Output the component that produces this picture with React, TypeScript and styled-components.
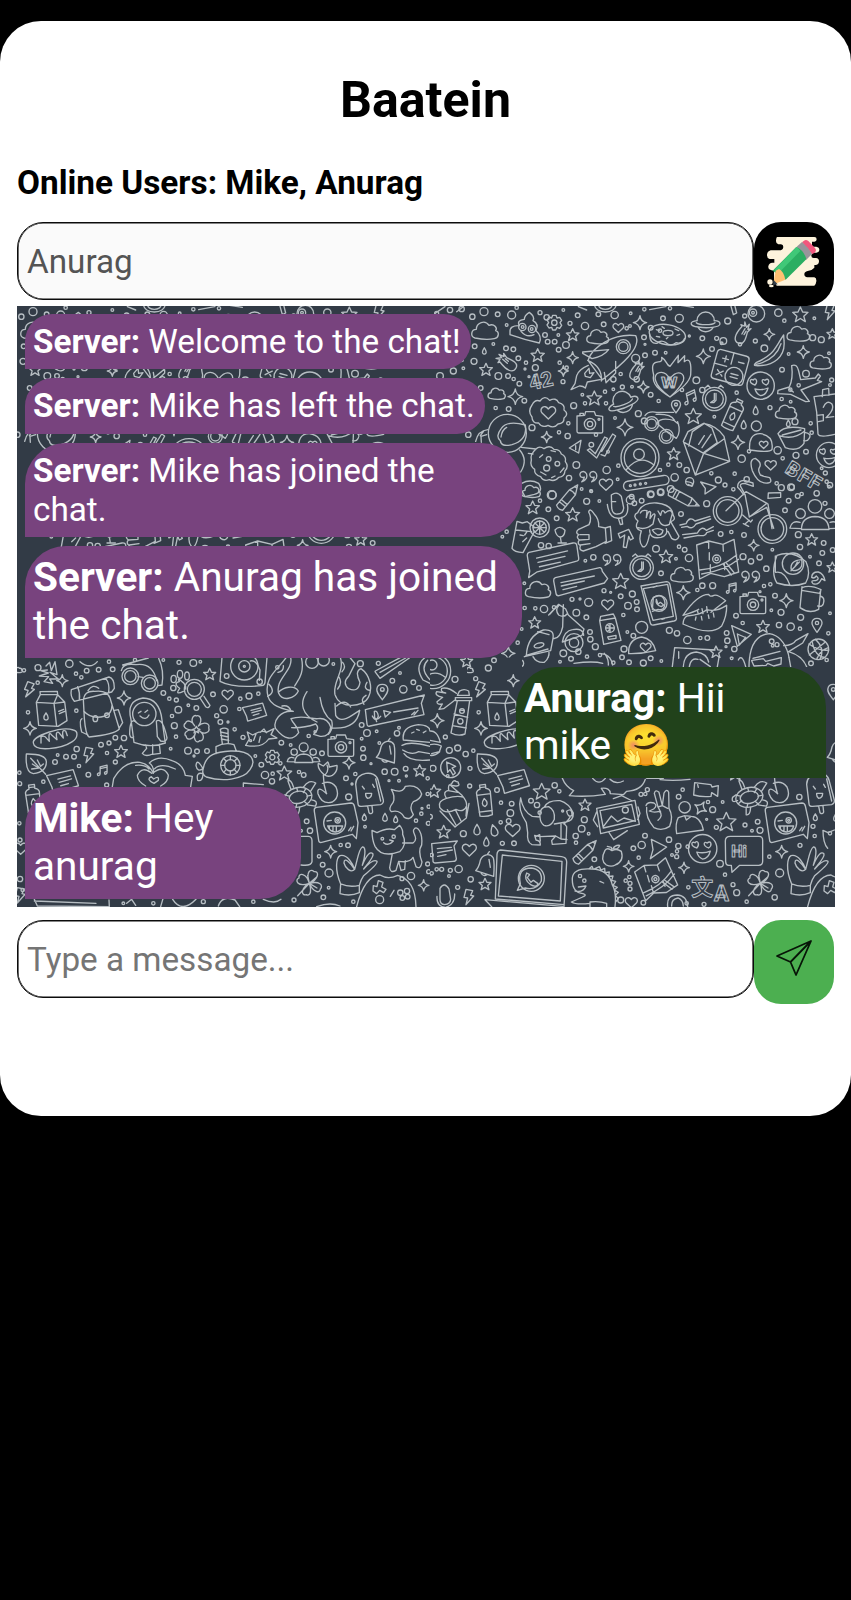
import React from "react";
import styled, { createGlobalStyle } from "styled-components";

const GlobalStyle = createGlobalStyle`
  * { box-sizing: border-box; }
  body { margin: 0; background: #000; font-family: Roboto, sans-serif; }
`;

const Page = styled.div`
  min-height: 1600px;
  padding-top: 20.5px;
  background: #000;
`;

const Card = styled.main`
  height: 1095.5px;
  padding: 0 17px;
  border-radius: 41px;
  background: #fff;
`;

const Title = styled.h1`
  margin: 0;
  padding-top: 50px;
  font-size: 50.1px;
  line-height: 58px;
  font-weight: 700;
  text-align: center;
  color: #000;
`;

const OnlineUsers = styled.h2`
  margin: 34px 0 0;
  font-size: 33.35px;
  line-height: 39px;
  font-weight: 700;
  color: #000;
`;

const FieldRow = styled.div<{ $top: number }>`
  display: flex;
  align-items: flex-start;
  height: 84px;
  margin-top: ${(p) => p.$top}px;
`;

const Field = styled.input<{ $filled?: boolean }>`
  width: 737px;
  height: 78px;
  padding: 0 9px;
  border: 1px solid #0c0c0c;
  border-radius: 26px;
  box-shadow: inset 0 0 0 0.6px #0c0c0c;
  outline: none;
  background: ${(p) => (p.$filled ? "#fafafa" : "#fff")};
  color: #545454;
  font: 400 33.25px Roboto, sans-serif;
  &::placeholder { color: #757575; opacity: 1; }
`;

const IconButton = styled.button<{ $color: string }>`
  display: flex;
  align-items: center;
  justify-content: center;
  width: 80.5px;
  height: 84px;
  padding: 0 0 6px;
  border: 0;
  border-radius: 27px;
  background: ${(p) => p.$color};
`;

const ChatPanel = styled.section`
  position: relative;
  width: 817.5px;
  height: 601px;
  overflow: hidden;
  background: #323b46;
`;

const Wallpaper = styled.svg`
  position: absolute;
  inset: 0;
  fill: none;
  stroke: #b7bec3;
  stroke-width: 1.35px;
  stroke-linecap: round;
  stroke-linejoin: round;
  path, circle, ellipse, rect, text { vector-effect: non-scaling-stroke; }
  text { stroke-width: 1px; }
`;

const Messages = styled.div`
  position: relative;
  display: flex;
  flex-direction: column;
  align-items: flex-start;
  gap: 9px;
  padding: 8px 8.5px 8px 8px;
`;

const Bubble = styled.div<{ $own?: boolean; $large?: boolean; $width: number; $height: number }>`
  align-self: ${(p) => (p.$own ? "flex-end" : "flex-start")};
  width: ${(p) => p.$width}px;
  height: ${(p) => p.$height}px;
  padding: 8px 8px;
  border-radius: ${(p) => (p.$own ? "41px 41px 0 41px" : "41px 41px 41px 0")};
  background: ${(p) => (p.$own ? "#21421b" : "#78437e")};
  color: #fff;
  font-size: ${(p) => (p.$large ? 40.6 : 33.27)}px;
  line-height: ${(p) => (p.$large ? 47.5 : 39)}px;
`;

type Placed = [string, number, number, number?, number?];

const SHAPES: Record<string, React.ReactNode> = {
  star: <path d="M0-20L6-7 20-6 9 4 13 18 0 10-13 18-9 4-20-6-6-7Z" />,
  spark: <path d="M0-21Q2-3 20 0Q3 3 0 21Q-3 3-20 0Q-3-3 0-21Z" />,
  heart: <path d="M0 18L-17 2C-27-10-10-24 0-9C10-24 27-10 17 2Z" />,
  cloud: <path d="M-30 22C-45 18-42-4-26-4C-26-24 0-34 12-16C28-22 38-8 32 0C44 4 42 22 28 24C10 28-12 26-30 22Z" />,
  drop: <path d="M0-16C8-4 12 4 8 11C4 17-4 17-8 11C-12 4-8-4 0-16Z" />,
  bolt: <path d="M-8-22L12-18 6-4 15-2-8 24-3 4-14 2Z" />,
  note: <path d="M-12 14V-12L14-18V8M-12-5L14-11M-12 14C-14 8-24 12-22 18C-20 24-12 20-12 14M14 8C10 4 2 8 5 14C8 18 14 14 14 8" />,
  quote: <path d="M-5-8C-12-20-27-12-22-2C-20 3-14 3-11 1Q-11 9-18 14C-4 10-2 0-5-8ZM22-8C15-20 0-12 5-2C7 3 13 3 16 1Q16 9 9 14C23 10 25 0 22-8Z" />,
  gear: <><path d="M-5-22H5L8-14 16-16 22-7 17 0 22 8 16 17 8 14 4 22H-5L-8 14-16 16-22 7-17 0-22-8-16-17-8-14Z" /><circle r="8" /></>,
  pin: <><path d="M0 22C-12 6-16 1-15-7C-13-24 13-24 15-7C16 1 12 6 0 22Z" /><circle cy="-6" r="5" /></>,
  camera: <><path d="M-39-19L-16-21-13-32H13L17-21 38-18V28Q38 32 33 32H-34Q-39 32-39 27ZM-30-20V-27H-20V-20" /><circle cy="5" r="17" /><circle cy="5" r="8" /><circle cx="27" cy="-9" r="3" /></>,
  pencil: <path d="M-46-10H17L46 0 17 15H-46Q-54 2-46-10ZM-32-10V15M-23-10V15M17-10Q22 0 17 15M36-4V5" />,
  planet: <><path d="M-26-8A26 26 0 0 1 26-8M-22 13A26 26 0 0 0 22 13" /><path d="M-26-8C-50-5-50 8-22 11C4 16 42 12 43 2C43-5 34-8 26-8M-28-2C-20 6 20 6 28-2" /></>,
  comet: <path d="M30 14C20 32 0 20-18-4L-24-2-18-12-30-15-13-17-21-27-6-20-7-30 2-17C20-9 38 0 30 14M-10-12L4 0M-2-14L7-6" />,
  clock: <><circle r="35" /><circle r="27" /><path d="M0-17V3L-11 11H-2L5 4V-17M-12-34L-19-41-27-34M12-34L19-41 27-34" /></>,
  bottle: <><path d="M-17 42L-19-22Q-17-29-8-31V-42H8V-31Q17-29 19-22L17 42Q0 47-17 42ZM-8-35H8M-19-15H19M-18 31H18" /><path d="M0-4Q13 11 0 18Q-13 11 0-4Z" /></>,
  flower: <><path d="M-5-12C-22-30-8-48 0-42C13-47 20-28 6-11C24-28 43-18 38-6C43 8 23 17 10 4C29 17 21 37 10 34C0 46-11 25-3 11C-10 32-30 34-31 20C-41 15-31-2-11 1C-37 1-43-13-33-20C-28-34-10-23-5-12Z" /><path d="M0-10L4-3 11-1 5 3 7 10 0 6-7 10-5 3-11-1-4-3Z" /></>,
  clover: <path d="M0 0C-36 12-45-10-31-16C-34-33-8-32 0 0C-12-36 5-45 14-35C32-38 27-11 0 0C31-8 43 6 33 17C32 31 12 28 0 0C9 29 0 39-9 34C-23 39-29 17 0 0ZM0 0L-35 37M-5-24L0 0 23-20M0 0L23 14" />,
  turtle: <><ellipse rx="43" ry="31" transform="rotate(-12)" /><ellipse rx="29" ry="19" transform="rotate(-12)" /><path d="M-5-30L-2-18M24-28L16-15M42-7L28-4M29 22L19 13M-7 31L-5 20M-35 20L-24 10M-40-6L-28-4M-24-27L-33-52Q-23-58-15-32M16-32Q34-59 55-45L38-18M42 8Q64 11 54 28L28 24M-10 32V55Q3 58 4 32M-37 10Q-58 20-53 0L-42-8" /></>,
  milk: <path d="M-46-22L-34-45H18L39-23 46 33 19 50-39 47ZM-46-22L7-19 18-45M7-19L15 50M7-19L39-23M-34-45L-35-54 17-55 18-45M-17 10C-27 23-24 31-17 31C-8 31-9 20-17 10M21 5L36-1M23 12L39 5" />,
  bread: <path d="M-64 8C-68-13 22-44 56-31C71-28 71-8 53 4C20 26-61 36-64 8ZM-41-11V8M-40-11Q-30-16-24-6L-16 3Q-20-30-9-16L7-2Q1-28 12-24L26-7Q19-34 33-28L38-14" />,
  leaf: <path d="M-29-30Q28-31 31-8Q32 24-8 29Q-33 26-29-30ZM-16-17L29 31M-11 0L8 12-13 15M4-12L14 7 22 0" />,
  card: <path d="M-51-18L33-37 50 14-29 38-34 18ZM-15-7L25-17M-11 3L28-8M-6 14L18 7" />,
  wink: <><path d="M-60-48L44-61Q52-61 54-52L65-2 60 46 48 33-44 57Q-52 59-53 51L-66-36Q-68-46-60-48Z" /><circle cx="-5" cy="-1" r="33" /><circle cx="4" cy="-9" r="8" /><circle cx="4" cy="-9" r="3" /><path d="M-28-7L-15-9M-26 8H19Q15 25-3 26Q-20 25-26 8M-21 9V16M-10 10V22M0 10V24M37 22L44 12M44 23L52 9" /></>,
  hand: <path d="M-34 78L-32 49C-51 5-45-30-34-36C-12-42 4-11 10 5C-1 17-18 2-22-14C-22-36 0-11 10 5C19-25 22-56 33-62C47-64 39-24 33-7C45-37 57-51 65-41C68-31 46-8 37 4C54-15 69-26 77-19C81-11 48 14 37 24Q28 37 24 53V75Q-3 87-34 78ZM-32 49Q-5 60 24 53" />,
  loveFace: <><circle r="41" /><path d="M-17-2C-38-8-32-23-22-17C-15-27-7-12-17-2M17-2C-2-9 4-24 13-16C24-26 29-10 17-2M-17 10Q4 15 22 7Q17 28 0 30Q-12 26-17 10" /></>,
  map: <><path d="M-60-45L-24-57 19-47 52-62 66 36 23 50-18 40-51 57ZM-24-57V-35M-22-22V0M-19 14V37M19-47L20-26M23 12L24 29M-51 30Q10 26 60-15M-45 42Q22 33 66-2M20 13L44 45M28 8L53 39" /><g transform="translate(0 -3)"><circle r="12" /><circle r="5" /></g></>,
  person: <><circle cy="-33" r="18" /><path d="M-39 46C-41 14-23 0 0-4C24 0 36 13 42 37Q2 47-39 46" /></>,
  bell: <path d="M-28 19Q-18 9-14-12C-8-30 15-36 25-19Q29-4 26 36ZM-12 26Q-5 38 6 31M8-31L13-38M12-15L16 9" />,
  ice: <path d="M-36-22C-36-60 23-67 31-35L47 25Q49 35 39 39L-18 44Q-29 45-29 36ZM-16-16L-10-8M15-22L20-13M-6 5H12Q12 19 0 20Q-7 16-6 5M0 44L4 63Q11 70 15 61L13 43M24-38L39 28" />,
  crowd: <><circle cy="-20" r="14" /><circle cx="-30" cy="-5" r="10" /><circle cx="30" cy="-5" r="10" /><path d="M-28 28Q-28 2 0 1Q28 2 29 28ZM-31 13Q-48 8-52 25L-29 26M31 13Q47 8 51 25L30 26" /></>,
  bubble: <path d="M-62-36L60-62Q70-64 71-54L76-20Q77-12 68-11L-39 18-63 34-60 16-67-28Q-67-34-62-36ZM-41-20L45-40M-37-8L38-25M-33 4L25-9" />,
};

const Doodles = ({ items }: { items: Placed[] }) => (
  <>
    {items.map(([kind, x, y, s = 1, r = 0], i) => (
      <g key={i} transform={`translate(${x} ${y}) rotate(${r}) scale(${s})`}>{SHAPES[kind]}</g>
    ))}
  </>
);

const Dots = ({ at }: { at: string }) => (
  <>
    {at.trim().split(/\s+/).map((dot, i) => {
      const [x, y, r] = dot.split(",");
      return <circle key={i} cx={x} cy={y} r={r || 7} />;
    })}
  </>
);

const skyItems: Placed[] = [
  ["cloud", 165, 92], ["cloud", 503, 110, 0.82], ["cloud", 1105, 101, 0.85], ["cloud", 1172, 186, 0.8], ["cloud", 200, 281, 0.65], ["cloud", 1068, 336, 0.8], ["cloud", 303, 574, 0.7],
  ["gear", 373, 68], ["heart", 565, 83, 0.8], ["spark", 630, 68], ["star", 428, 105, 0.95], ["star", 323, 166], ["star", 168, 209, 0.95], ["spark", 428, 173, 0.85], ["spark", 400, 213, 0.75],
  ["planet", 827, 70], ["planet", 580, 310, 1.08, -22], ["star", 1111, 44, 1.15], ["star", 1207, 102, 0.8], ["spark", 1018, 103, 0.8], ["spark", 1120, 156, 0.9], ["spark", 820, 169, 1.05], ["spark", 640, 261, 0.85], ["spark", 256, 290, 1.1], ["star", 493, 295, 1.1],
  ["comet", 228, 190], ["comet", 617, 210, 0.9, 80], ["comet", 935, 98, 1, 80], ["bolt", 1200, 35], ["note", 783, 290, 1, -12], ["clock", 853, 297], ["bottle", 911, 342, 1.1, 25], ["pin", 738, 319, 0.9], ["star", 790, 349, 1.2],
  ["camera", 480, 367], ["spark", 585, 382, 1.2], ["spark", 350, 411, 0.8], ["star", 731, 462, 0.95], ["spark", 924, 427, 1], ["loveFace", 992, 257], ["loveFace", 1197, 465, 0.92], ["drop", 977, 331, 0.8], ["drop", 941, 374, 0.8], ["drop", 163, 153, 0.6], ["drop", 1075, 370, 0.6],
  ["heart", 355, 337, 1.1], ["heart", 1022, 495, 0.85], ["quote", 475, 530, 1.1], ["heart", 1001, 434, 0.65],
];
const skyDots = `127,50,8 162,35,12 203,43 245,45,12 230,75,4 345,105 353,125 400,30,4 443,46 465,78,11 505,43 521,73 554,45,11 602,40,4 643,28,5 662,83 642,112 699,55 748,55,12 720,25,5 893,63,9 778,108,3 645,133,3 817,115 860,115,6 880,123,10 944,48,6 1045,38,11 1063,62,5 1148,113,9 1174,119,9 1153,55,4 976,123,6 1003,145,10 1076,162,4 846,147 250,148 265,175 228,145 190,132,4 132,184,9 134,139 288,188,5 316,203,9 285,207,3 389,188,5 408,135,10 386,149 374,125 234,228 205,228,10 297,230,3 399,245,6 268,251 251,237,5 283,302 236,327 197,324,5 152,264 457,284,4 431,317,9 465,310,5 550,268,4 577,261,6 606,260,4 645,166 675,158 707,158,4 617,175,12 572,222,5 550,238,8 620,238,8 662,284 686,303,5 625,341,9 643,363,9 555,354,4 528,310,5 525,275,5 756,270,5 799,241,10 817,270,8 920,278,5 1056,209 1128,221,10 1205,240,6 1020,323,6 1082,305,4 1055,297,5 853,350,4 1095,365,9 1142,370,5 1145,398,5 979,378,15 1128,455 1098,466,9 1043,451,11 1058,475,5 1186,519,6 935,476,11 914,521,5 950,538,8 957,454,5 865,540,9 844,520,5 748,495 715,494,5 770,510,8 690,510,5 734,532,11 779,545,12 601,600,12 663,583,8 692,576,8 722,567,10 530,510,11 565,497,5 563,538,4 534,455,4 439,495,10 484,434 417,534,8 455,567,4 484,574,4 367,585,12 387,397,5 413,408,8 415,370,5 498,404,5 306,383,9 115,404,8 1175,505,4 1054,563,9 1085,561,8 1115,582,5 1160,580,8 1197,560,4 1190,545,5 1200,255,4 1197,160,4 420,70,6 385,105,4 600,78,4 70,213,9 95,180,5 100,205,4 30,228,10 20,40,6 60,30,8 95,27,8 260,23,5 330,38,6 350,52,8 410,203,5 590,85,5 690,92,5 875,130,4 930,133,5`;

const Sky = ({ lettered }: { lettered?: boolean }) => (
  <g transform="translate(430 300) scale(.33333)">
    <Doodles items={skyItems} />
    <Dots at={skyDots} />
    <path d="M240 97Q238 76 268 77Q259 61 283 58Q283 46 298 37Q316 50 309 62Q328 72 318 92Q337 108 328 129Q282 119 240 104ZM273 94Q290 114 312 104" />
    <circle cx="277" cy="81" r="11" /><circle cx="306" cy="87" r="11" /><circle cx="278" cy="81" r="4" /><circle cx="305" cy="87" r="4" />
    <ellipse cx="712" cy="104" rx="55" ry="30" transform="rotate(10 712 104)" /><ellipse cx="714" cy="99" rx="15" ry="8" />
    <path d="M659 101Q659 133 681 130Q692 118 708 128Q722 141 738 128Q756 134 764 115M679 89L688 92M696 80L703 85M735 87L746 92M679 109L689 111M709 116L714 112M741 106L749 103" />
    <path d="M474 181C487 140 551 99 617 107C637 143 571 198 517 239ZM458 156L536 149Q521 169 486 176L458 160ZM557 184L557 219 528 248 523 217M473 181Q518 200 514 243M475 196Q446 208 440 227L435 251 423 269 448 258Q458 257 466 264L472 246 510 239M464 220L477 205 479 220 492 218 481 233 466 229Z" />
    <circle cx="580" cy="140" r="21" /><circle cx="580" cy="140" r="14" />
    <path d="M1061 105C1033 145 1035 163 978 188Q968 197 978 197C1031 199 1067 170 1062 122ZM978 193Q1036 181 1053 131" />
    <g transform="rotate(15 900 200)"><rect x="852" y="157" width="98" height="90" rx="10" /><path d="M852 202H890M901 157V192M872 181H890M881 172V190M866 218L884 234M884 218L866 234M921 180H938" /><circle cx="919" cy="225" r="27" /><path d="M908 219H930M908 229H930" /></g>
    <path d="M671 225C655 163 702 202 695 172C713 183 706 193 720 199L745 166 744 188 764 167 763 185Q786 166 782 225Q777 253 720 291C688 270 664 252 671 225ZM720 291C666 252 669 222 688 218Q707 213 719 237C743 205 767 220 760 242Q750 264 720 291Z" />
    {lettered && (
      <>
        <text x="694" y="265" fontSize="42" fontWeight="800" textLength="48" lengthAdjust="spacingAndGlyphs">W</text>
        <text x="303" y="271" fontSize="62" fontWeight="800" transform="rotate(-13 303 271)">42</text>
        <text x="1062" y="516" fontSize="60" fontWeight="800" letterSpacing="4" transform="rotate(31 1062 516)">BFF</text>
      </>
    )}
    <path d="M1085 197Q1101 190 1106 213L1112 239 1156 234 1165 222 1171 228 1162 241 1175 245 1113 270 1138 304 1127 305 1082 283 1043 281 1044 271 1078 261Q1090 236 1085 197ZM1079 268L1090 276" />
    <circle cx="1106" cy="256" r="5" /><circle cx="1081" cy="269" r="5" />
    <path d="M306 315Q315 297 330 303Q344 284 359 301Q378 291 386 308Q406 313 402 330Q418 342 402 354Q403 371 384 372Q372 387 354 376Q336 385 326 369Q306 370 306 351Q292 334 306 315Z" />
    <path d="M645 347Q655 332 680 337H731M678 343Q723 341 733 360M743 365Q754 396 739 415L713 397 680 370Q693 350 733 362L746 373" /><circle cx="665" cy="371" r="21" /><circle cx="709" cy="409" r="21" /><circle cx="665" cy="371" r="14" /><circle cx="709" cy="409" r="14" />
    <path d="M760 424L774 395 821 370Q859 376 882 409L899 484Q853 503 796 525ZM764 428L821 460 882 417M821 460L796 525M821 460L899 484M776 438L787 395 823 370 846 384 862 428 821 458M806 433L823 407M816 443L843 403" />
    <circle cx="630" cy="473" r="57" /><circle cx="630" cy="473" r="47" /><circle cx="627" cy="463" r="16" /><path d="M589 509Q629 460 672 495" />
    <circle cx="232" cy="400" r="57" /><path d="M211 422Q195 410 214 385Q232 360 286 375Q293 420 246 434Q213 442 211 422ZM213 411Q216 389 230 382M174 389Q144 392 137 424M170 404L153 409 154 427M161 393L151 407" />
    <path d="M274 442L318 447Q328 436 342 446Q360 434 372 448Q390 448 394 462Q410 470 406 485Q418 500 405 512Q404 530 386 532Q375 546 358 539Q340 546 332 530Q312 524 314 508Q299 498 304 480Q299 464 318 447M295 460L309 462M269 450Q295 480 272 516" /><circle cx="356" cy="477" r="7" /><circle cx="350" cy="504" r="9" /><circle cx="382" cy="491" r="7" />
    <path d="M329 472L338 464M332 516L348 525M391 517L402 504M365 533L375 528M363 452L376 455" />
    <path d="M418 444L453 421 446 459ZM437 437V449M472 450L480 446 496 461 524 411 532 415 500 474ZM515 454L548 402 557 408 525 468 513 464" />
    <path d="M959 450Q955 400 991 401Q1032 407 1026 448Q1020 459 959 450ZM1044 401Q1061 373 1124 386L1122 430Q1104 457 1066 443ZM1047 407Q1092 421 1124 393M1124 397Q1147 401 1137 416Q1132 425 1121 422M1057 405L1113 390" />
    <path d="M976 475Q956 477 967 512Q984 553 1014 549Q1028 547 1019 533L1002 529 991 525Q983 511 988 503Q997 488 976 475Z" />
    <path d="M1177 290L1178 269 1196 265 1197 286M1152 290L1214 282M1152 290L1160 336 1164 402Q1168 414 1214 403M1161 346L1180 344V362L1165 365M1180 322Q1189 299 1205 311Q1216 328 1188 353L1211 350" />
    <circle cx="979" cy="41" r="25" /><circle cx="969" cy="38" r="11" /><circle cx="969" cy="38" r="4" /><ellipse cx="526" cy="15" rx="32" ry="21" /><ellipse cx="526" cy="15" rx="20" ry="13" /><path d="M659 29L707 20 714 8M902 15L910 44 920 39 914 15M445 20L470 30M745 15L790 22M15 40L45 20M80 35L100 20" />
  </g>
);

const cityItems: Placed[] = [
  ["pencil", 205, 48, 0.95, -50], ["heart", 318, 13], ["pencil", 555, 55, 1.05, 28], ["star", 98, 83], ["star", 218, 104, 1.05], ["star", 935, 179, 0.9], ["star", 498, 230], ["star", 362, 304, 1.2], ["spark", 761, 196, 0.8], ["quote", 336, 240, 1.15], ["quote", 752, 290, 1.15],
  ["bubble", 154, 256, 1.08], ["clock", 425, 263], ["map", 650, 240], ["cloud", 546, 284, 0.85], ["cloud", 114, 329, 0.95], ["note", 697, 323, 0.8], ["spark", 550, 338, 1], ["camera", 759, 369], ["spark", 859, 362], ["heart", 323, 374, 0.9], ["star", 104, 428, 0.9], ["star", 789, 440, 0.95], ["pin", 951, 435], ["star", 648, 516, 0.9], ["star", 997, 262, 0.8], ["person", 425, 475], ["heart", 437, 502, 0.8], ["crowd", 945, 108, 1.45], ["spark", 25, 520],
];
const cityDots = `155,45,13 120,62,5 145,88 170,115 273,33,4 260,64,9 298,63,4 395,50 403,70 452,43,10 482,37,10 425,62 543,102 620,71,9 662,162 694,156,5 732,165 817,209,4 855,91 893,48 866,62 873,22,10 900,201,8 895,164,9 971,189 967,219 998,210 957,250 930,230,4 990,15,8 975,70,6 123,196,8 146,198,8 256,242,4 280,232,8 468,206,10 537,200,5 554,209 567,234,11 483,280,7 528,236,4 729,230,9 753,244,8 779,232,8 799,266,8 792,318,5 811,313,5 825,347 902,412,9 843,397,9 814,391,4 837,435,8 872,440,11 900,446,5 708,407 728,429,5 592,330,5 607,317,8 638,317,9 73,310,4 74,384,5 106,385,5 132,387,11 162,382,5 216,358,6 240,357,3 266,367,12 312,332,6 332,337,3 362,349 397,342,9 384,377,10 410,366 411,388 370,405,5 259,412 229,398,10 270,456 271,478,8 286,500,9 382,456,4 400,467 372,507,9 366,532,7 387,547 430,549,9 452,535 484,543,4 508,451,9 531,460,8 562,480,11 601,474,5 622,474,7 680,459 682,482,8 678,500,3 703,507,8 695,535,4 61,550,10 53,488,5 190,520,10 213,536 235,515,8 261,530,5 300,525,5 180,545,4 933,550,7 980,540,5 830,10,5 675,15,6 700,28,5 20,155,5 7,170,4 990,400,4 985,460,5 780,335,3 65,447,4 340,548,5`;

const City = () => (
  <g transform="translate(500 480) scale(.33333)">
    <Doodles items={cityItems} />
    <Dots at={cityDots} />
    <rect x="370" y="-5" width="138" height="28" rx="14" transform="rotate(-9 438 10)" /><Dots at="391,17,3 405,15,3 421,12,3 437,10,3" />
    <path d="M602 6L648 20 615 42 616 25ZM560 5Q585 8 576 19L564 13M65 10Q90-4 116 10Q132 35 103 43L75 50 67 35M334 45Q351 32 364 49L371 83Q370 102 353 102Q337 104 335 83ZM322 73Q328 121 362 114Q389 108 382 73M355 115L361 134 368 132 365 112M334 65L347 65" />
    <path d="M236 148L267 134Q277 115 266 96Q270 82 282 101Q298 117 296 140L316 144 319 184 288 200 250 213Q236 211 241 197Q230 190 238 180Q227 171 236 164Q224 157 236 148ZM240 164H267V178L239 180M241 195L270 191M254 212L270 206M316 144L331 139 335 182 315 190" />
    <path d="M413 98Q427 66 470 69Q518 74 520 107Q529 119 512 125L537 169Q531 186 515 175L504 154M413 98Q395 107 414 123Q401 146 424 153Q414 183 427 199Q440 208 448 165M421 99Q426 88 441 92L439 113Q445 88 452 97L450 116Q462 95 465 105L459 132Q437 151 414 143M474 93L482 106Q486 82 495 99Q514 83 517 101L508 133Q485 145 475 116M449 150Q449 179 483 172Q505 166 499 146M457 150Q474 141 489 151Q487 165 473 165Q462 160 457 150" />
    <path d="M355 161L386 148 400 175 391 180 386 169 379 203 370 201 374 165 360 174ZM540 135L558 131Q569 107 585 123L630 109M545 142L562 139Q577 150 588 132L632 117M548 164L592 159Q605 135 619 151L640 140M552 174L596 166Q616 170 620 158L640 151" />
    <circle cx="683" cy="93" r="43" /><circle cx="683" cy="93" r="34" /><circle cx="817" cy="147" r="43" /><circle cx="817" cy="147" r="34" />
    <path d="M678 92L738 35 801 70 748 111 735 43 722 20Q718 10 734 10L760 19 759 9 733 1Q712 2 713 22L720 29 731 44M738 35L804 72 816 146M748 111L800 82 821 145M804 55L805 39 842 38 842 52ZM728 105L752 126 757 120M734 133L748 121M730 131L746 139" />
    <path d="M51 124L36 205Q43 216 69 218L104 153M51 124L67 129 82 125 105 143M47 150L95 155M60 165L70 167M68 185L80 174M81 155L74 165" /><circle cx="119" cy="143" r="29" /><circle cx="119" cy="143" r="20" /><path d="M119 123V163M99 143H139M105 129L133 157M133 129L105 157M165 150Q179 134 195 151Q193 172 179 171Q168 167 165 150ZM181 171L184 189M174 189H199" />
    <path d="M166 293L299 263Q305 262 307 274L323 296 313 309 177 347Q169 348 168 340L161 303Q160 296 166 293ZM183 308L283 288M184 318L253 303M189 329L230 319" />
    <path d="M831 226Q877 209 918 245Q934 280 917 309Q878 324 831 309Q811 280 831 226ZM827 277Q854 271 870 316M826 228V275" /><circle cx="879" cy="251" r="32" /><path d="M874 269Q868 242 905 239Q911 271 880 272ZM873 272L898 246M885 260L892 246" />
    <path d="M423 318L499 305Q508 305 510 314L529 413Q531 421 522 423L461 435Q453 437 451 429ZM430 326L503 313 520 409 459 421ZM459 322L471 318M486 418L493 416" /><circle cx="477" cy="370" r="24" /><path d="M457 388L460 352Q492 337 495 370Q494 393 474 388L457 394M469 358Q465 374 484 380L491 375 481 367 474 373 469 358" />
    <path d="M549 406Q592 343 626 343Q629 352 642 346Q653 343 677 362L633 397M549 406Q585 395 596 388M561 408Q604 404 620 389 647 397 680 376Q681 408 665 438Q632 470 549 432Q550 414 561 408M592 391L595 402M606 386L609 401M620 380L622 397M586 420L588 411M606 420L604 409M627 415L625 405M642 411L640 399" />
    <path d="M906 320L900 383Q928 403 956 388L962 331M961 348Q976 353 970 371Q966 382 953 378M906 323Q930 313 963 329L959 340 905 331ZM935 292Q936 275 955 276Q971 281 975 302L965 296Q955 317 939 311Q929 300 947 302Q961 297 949 288Q942 297 935 292Z" />
    <path d="M146 405L176 373 197 387 205 405 252 447 246 466 187 486M190 374L188 441Q179 479 159 475M79 526Q82 468 130 450Q164 447 159 475L152 512 73 530M78 526L144 507M113 455L147 464M201 402Q192 414 176 405Q164 388 176 377M187 486Q193 452 218 449 249 443 251 466M99 530Q109 549 133 547Q149 534 147 513M150 402L168 382" /><circle cx="222" cy="488" r="27" /><circle cx="222" cy="488" r="14" /><ellipse cx="117" cy="496" rx="15" ry="7" transform="rotate(-15 117 496)" />
    <path d="M299 422L346 414 363 481 311 493ZM299 422L302 409 340 402 346 414M323 471L348 466V475L326 478ZM695 437L754 463 712 499ZM712 462L718 495 737 472M712 462L740 474" /><circle cx="330" cy="444" r="13" /><path d="M330 431V457M318 444H342M322 434Q338 444 322 455" />
    <path d="M517 560L524 503 645 510M657 532L652 560M536 515V535M550 560Q552 519 589 516Q620 520 626 546M568 560Q572 532 594 538M600 538L631 560M747 560Q748 466 808 461Q849 468 865 522L872 560M759 535L840 514M756 541L790 536 797 544 844 533 843 552 821 558 803 550 798 556 762 558 755 542M851 497Q879 496 887 482L924 461 908 489 866 515M866 515Q907 527 920 560M715 540Q726 520 737 560M302 521Q332 522 338 555M313 520Q327 537 325 555M222 550Q280 542 308 550" /><Dots at="815,484,7 831,494,6 818,497,4" />
    <circle cx="955" cy="508" r="31" /><path d="M927 492Q957 514 986 510M946 478Q976 505 960 538M937 487Q945 529 974 532M928 525L976 486M951 536Q960 510 985 503" />
  </g>
);

const gardenItems: Placed[] = [
  ["spark", 187, 122, 0.85], ["milk", 155, 209], ["spark", 372, 174], ["bolt", 88, 148, 1, 8], ["spark", 90, 265, 0.95], ["bread", 164, 301], ["bolt", 266, 344], ["star", 363, 335, 0.95], ["leaf", 108, 372], ["card", 188, 424, 0.95], ["note", 310, 390, 0.8], ["bottle", 100, 480, 1.1, -7],
  ["star", 629, 103, 0.9], ["heart", 683, 164, 0.85], ["flower", 589, 269, 0.98], ["card", 764, 216, 0.72], ["gear", 817, 352, 0.95], ["star", 853, 400, 1.1], ["crowd", 911, 341, 0.95], ["camera", 1023, 317], ["spark", 1047, 368, 0.9], ["bell", 1157, 333], ["star", 1259, 392, 0.9], ["pin", 1147, 155, 1.1], ["turtle", 895, 472, 0.95], ["wink", 1009, 550], ["ice", 1103, 455], ["drop", 1093, 532, 0.65], ["drop", 1155, 532, 0.75], ["drop", 1187, 538, 0.65], ["spark", 992, 635, 0.9], ["clover", 928, 730], ["hand", 1054, 683], ["spark", 1271, 736, 0.8], ["heart", 62, 625], ["bolt", 60, 765], ["cloud", 55, 90, 0.3],
];
const gardenDots = `114,83,9 72,91,5 208,71,11 228,101,5 260,92 296,89,7 327,65,5 338,88 113,128,5 244,112,5 84,217,5 229,212,5 230,327,8 173,345,4 198,350 222,350 165,366 265,404 237,378,5 303,314 327,309,6 346,293 372,294,8 321,339,5 346,366,6 490,159,7 508,176,5 529,180,6 516,228,5 523,257,9 528,290,5 535,209,10 512,326,4 537,67,6 580,69,10 601,65,4 639,163 589,204,7 565,196,4 671,208,11 650,227,6 661,246 684,246,3 704,268,5 729,292,6 718,207,5 721,176,5 747,168,9 775,161,5 766,348,4 784,374 795,405,11 818,401,5 816,424,8 841,370,5 844,308 897,396,5 911,405 872,315,4 926,288,5 945,275,3 966,340 564,332,10 591,334 582,348,3 621,333 832,82,5 1081,71,9 1177,122 1210,148,11 1200,99,4 1240,127 1257,144 1085,255 1101,279,10 1130,274,4 1191,280,8 1197,263,4 1085,296,4 1089,326,7 1090,353,8 1138,309,4 1113,371,3 1066,402,5 1038,415 1056,432,3 1046,471,9 1154,395,8 1184,395,10 1217,386 1219,408,3 1197,422,4 1167,422,3 1283,415,5 1283,462,5 1286,500,5 1266,505,3 1264,521,5 1248,542,5 1285,550,6 920,544 930,572,8 903,572,4 1022,615,5 1044,616,7 1095,560,4 957,649,5 968,674,7 987,699,12 970,772,7 986,743,4 1206,716,6 1233,708,11 1283,672,6 1286,695,6 882,780,6 1060,785,5 58,398,5 59,431,6 60,717,8 68,750,5 58,550,5 320,435,6 130,425,5 405,60,5 490,60,4 1135,70,6 60,600,6 1000,72,4`;

const Garden = () => (
  <g transform="translate(0 640) scale(.33333)">
    <Doodles items={gardenItems} />
    <Dots at={gardenDots} />
    <path d="M138 78L149 67 154 92 165 65 171 104 150 97 175 117 149 117 158 130 132 125 146 110 118 108 145 99 122 92 142 90M240 65Q270 90 292 65" />
    <path d="M214 149L327 111Q343 114 343 145L335 156 223 184Q210 170 214 149ZM233 140Q241 160 238 179M317 115Q330 131 326 158M264 152Q278 130 296 145M250 178Q254 152 284 154Q321 149 330 174L358 267Q345 283 267 291Q257 284 253 235ZM251 213Q275 240 315 228Q335 223 336 196M246 236Q236 240 245 276L264 285M343 211L355 209 368 248 357 265" /><ellipse cx="286" cy="236" rx="7" ry="9" /><circle cx="321" cy="226" r="7" />
    <circle cx="391" cy="109" r="25" /><circle cx="391" cy="109" r="17" /><circle cx="449" cy="130" r="25" /><circle cx="449" cy="130" r="17" /><path d="M364 92Q368 68 408 74Q458 67 470 122M414 110L429 112M368 75L445 54M476 55Q493 90 486 135L474 137" />
    <path d="M402 307L393 239Q378 182 429 174Q479 175 486 240L496 309Q451 326 402 307ZM407 245Q389 232 389 283Q392 297 401 291M469 243Q488 231 501 294Q500 307 482 303L472 290ZM437 315L440 325 427 340Q436 352 458 342L458 315M458 343L481 340 478 313" /><circle cx="433" cy="222" r="35" /><path d="M415 219L423 214M435 217L443 211M420 228Q438 244 447 225" />
    <circle cx="583" cy="148" r="30" /><circle cx="583" cy="148" r="21" /><path d="M600 174L617 200Q626 207 630 196L612 169M550 154Q523 167 539 145Q518 129 538 125Q531 111 545 124Q559 133 557 147" /><ellipse cx="521" cy="117" rx="8" ry="11" /><ellipse cx="540" cy="103" rx="8" ry="12" /><ellipse cx="561" cy="108" rx="7" ry="12" /><circle cx="520" cy="144" r="8" />
    <path d="M666 52L660 124Q700 145 785 137Q794 136 795 127L801 52M751 63Q768 58 780 90L778 121" /><circle cx="733" cy="79" r="41" /><circle cx="733" cy="79" r="17" /><circle cx="733" cy="79" r="3" /><circle cx="680" cy="108" r="7" /><circle cx="779" cy="125" r="8" />
    <path d="M859 52C832 91 790 112 804 169C813 201 855 207 880 214C840 210 818 244 827 266C854 300 878 303 896 278C894 258 880 253 873 236C910 223 935 239 954 236Q982 232 992 261Q990 291 961 289L941 283Q961 265 947 252Q909 265 875 263M872 53C881 91 824 118 836 160C847 185 884 177 895 153C883 134 851 141 835 157M904 52C915 100 894 121 884 138M921 155C897 190 906 225 951 246M960 172Q968 224 995 242Q1001 267 985 283M1021 52C1035 97 997 123 1005 164C1019 210 1092 201 1105 172C1120 144 1109 104 1083 86Q1063 93 1080 127Q1075 159 1046 146Q1025 129 1047 107L1065 71 1051 54M1005 190L1007 226Q1020 250 1056 226L1079 211Q1070 269 995 264M803 169Q829 156 807 133M834 97Q852 94 850 77M873 213Q867 194 846 198M1010 198Q1035 174 1052 201M1092 193Q1080 177 1098 166M1110 151Q1088 147 1101 127M1013 147Q1028 128 1017 111M1026 95Q1040 82 1028 67" /><circle cx="936" cy="66" r="19" /><circle cx="971" cy="61" r="17" />
    <path d="M1126 93L1202 52M1125 95L1140 115 1228 54M1140 97L1217 54M1274 53Q1242 79 1269 120L1290 130M1283 61Q1258 87 1290 119M1096 209L1273 165 1264 190 1272 224 1110 258Q1102 261 1101 252ZM1123 214Q1132 210 1135 228Q1131 243 1124 233ZM1117 228Q1127 249 1142 229M1128 239L1130 245M1151 212L1156 231 1172 217ZM1181 216L1254 204M1235 224L1244 216M1242 225L1254 211" />
    <path d="M737 316L748 297 742 276 758 285Q785 269 799 277L822 266 813 284 831 294 806 297Q787 326 737 316ZM768 282L761 301M781 290L777 307M781 277L792 267 799 278" /><circle cx="752" cy="302" r="3" />
    <path d="M610 385C617 343 650 335 692 333C756 331 770 361 750 389C729 421 664 425 619 411Q604 403 610 385ZM648 341L648 320Q674 306 702 314L709 333M667 311L661 268Q673 261 684 268L685 309M662 276L684 281M662 286L685 291M664 297L686 301M609 386Q590 353 588 377Q592 398 609 386M609 401Q587 395 593 421Q608 426 609 401" /><circle cx="691" cy="376" r="29" /><circle cx="691" cy="376" r="17" /><path d="M691 347V359M691 393V405M662 376H674M708 376H720M670 355L679 364M702 387L711 397M671 397L679 388M703 364L712 355" />
    <path d="M337 440L341 416Q371 363 420 367Q447 372 460 400Q463 380 448 369Q475 344 516 362Q550 372 556 406L577 409 572 440M455 400Q427 376 412 406Q412 424 437 438M459 399Q489 374 505 405Q505 426 482 438M407 376Q435 373 447 387M464 386Q483 367 526 387M462 430Q437 418 454 410L461 417Q478 406 475 421ZM730 440V429L790 434" />
    <path d="M980 461Q950 434 954 461Q966 495 997 486Q1021 471 1008 441Q992 420 967 430M979 460Q970 434 970 405M974 405Q951 387 955 370L970 378 983 366Q987 371 988 381L1011 376Q1013 396 997 406Q983 412 974 405M981 375Q988 391 976 404" />
    <path d="M1174 448Q1208 462 1216 439Q1255 432 1265 462Q1261 478 1240 485Q1226 501 1240 524Q1230 542 1213 532Q1200 508 1174 515Q1163 507 1179 488Q1187 470 1174 448Z" />
    <path d="M1210 300Q1204 260 1255 254Q1290 256 1290 273M1210 300L1290 307M1206 316Q1230 302 1290 319M1208 330Q1235 347 1256 335L1290 341M1212 341Q1228 366 1290 360M1235 279L1242 276M1250 268L1258 271M1270 278L1278 273" />
    <path d="M1116 571L1131 578Q1160 562 1183 569L1199 556Q1210 569 1208 583Q1223 613 1199 635Q1146 655 1125 619Q1116 600 1116 571ZM1177 641L1169 683Q1171 701 1188 691L1196 664Q1231 669 1239 652L1248 680Q1262 690 1266 666Q1253 632 1265 615C1269 577 1251 555 1243 567C1231 575 1260 594 1239 609L1208 609M1151 608Q1165 620 1180 603L1169 600M1196 664L1203 691 1214 688 1216 663" /><Dots at="1147,596,4 1181,590,5" />
    <path d="M902 589H925Q936 590 936 602V665Q934 679 903 675M1070 800Q1094 706 1140 705Q1164 720 1193 706Q1246 719 1248 800M1120 737L1131 740 1135 722 1149 727 1145 741 1158 748 1151 758 1139 751 1130 761 1119 753ZM1182 751L1171 769" /><Dots at="1201,758,8 1221,753,8 1223,770,7 1207,774,7 1139,779,12" />
    <path d="M103 778L112 798 328 800 327 780M103 783L288 790M482 800L489 776M518 778Q546 821 588 778M655 798Q666 765 705 780L719 800M790 778Q825 794 843 778M380 790L395 778 407 796M950 800Q990 785 1020 798" /><Dots at="370,790,4 460,790,5 610,785,6 760,785,5" />
  </g>
);

const streetItems: Placed[] = [
  ["star", 110, 64, 0.9], ["spark", 22, 242], ["star", 12, 454], ["star", 41, 576], ["star", 335, 455, 1.25], ["star", 465, 495, 0.9], ["spark", 812, 504, 1, 30], ["star", 889, 546, 1.45], ["drop", 141, 569], ["drop", 192, 571, 1.1, -15], ["heart", 248, 570, 1.1], ["drop", 169, 605, 0.85], ["heart", 118, 629, 1.05], ["bell", 165, 673], ["star", 165, 733, 0.9], ["bolt", 116, 770], ["spark", 596, 679, 0.8], ["spark", 762, 683, 0.8], ["pencil", 467, 632, 0.95, -44], ["loveFace", 818, 626, 1.04], ["heart", 604, 787, 0.9], ["map", 677, 720, 0.9, -16], ["cloud", 75, 430, 0.3],
];
const streetDots = `0,530,7 9,385,9 46,291,6 58,331,9 83,324,9 107,342,8 120,385,6 130,332,5 75,118,9 137,116,6 175,84,9 146,217,5 192,61,7 119,438,6 53,408,4 213,488,5 245,491,7 241,519,10 236,543,7 212,547,5 217,610,6 252,610,7 100,581,9 201,450,7 303,482,7 321,495,8 329,518,5 374,436,8 388,454,5 463,539,9 455,566,10 437,588,8 476,581,4 438,608,5 493,658,7 610,625,7 635,615,11 626,653,5 645,587,7 717,599,8 745,618,8 741,634,5 740,650,6 726,645,4 773,620,5 834,486,5 848,509,9 830,538,3 859,562,6 878,486,4 945,555,6 983,545,7 990,571,9 966,572,4 746,470,7 758,449,5 652,449,6 646,462,5 633,463,6 870,671,10 885,704,5 909,734,6 920,758,9 1034,772,8 1049,699,12 1018,650,5 598,711,5 600,730,6 600,747,6 587,722,5 572,780,9 640,788,7 775,742,5 770,790,5 822,793,6 950,785,5 35,688,6 61,691,6 86,687,11 83,742,6 122,718,8 20,688,5 5,645,5 5,700,5 57,708,4 1108,471,8 1149,559,6 1154,588,5 1110,616,6 1200,580,5`;

const Street = () => (
  <g transform="translate(430 640) scale(.33333)">
    <Doodles items={streetItems} />
    <Dots at={streetDots} />
    <circle cx="9" cy="93" r="53" /><circle cx="9" cy="93" r="43" /><circle cx="6" cy="75" r="15" /><path d="M-29 128Q7 80 46 112" />
    <path d="M88 154Q101 144 116 153L118 166H82ZM76 173H125V182H77ZM82 182L63 279Q84 290 105 282L119 182M72 222L113 232M67 257L109 264M90 210L103 212M79 160Q54 140 35 145Q30 155 47 159L20 155Q12 166 38 172L21 185Q20 195 37 192L27 208 41 206 76 179" /><circle cx="96" cy="213" r="7" /><circle cx="91" cy="244" r="8" />
    <circle cx="62" cy="383" r="30" /><path d="M50 366L77 379 66 384 76 399 69 405 60 389 53 397Z" />
    <path d="M-5 274Q21 267 31 307L-5 300M-5 315Q18 309 34 318L28 335 5 341M-5 345Q12 351 29 335" />
    <path d="M29 502Q23 483 49 475Q36 455 56 451Q54 435 60 434Q76 449 96 466Q111 483 110 497Q103 519 78 508Q46 526 29 502ZM30 513L75 561 109 534 117 490M52 509L78 555M76 509L93 543M110 501L108 528M49 475Q79 466 99 471M55 452L83 457" />
    <path d="M5 611L82 603 72 618 79 656Q79 664 69 664L15 669Q8 669 9 660ZM22 626L64 622M23 638L67 630M23 649L48 644" />
    <path d="M272 474Q279 515 307 529L330 531M272 474Q262 508 289 548L293 578Q290 607 306 614L331 615Q332 602 318 600L314 586L330 590 377 588M317 590L329 584 331 603M377 588L365 602 367 613 408 610 410 560 400 548M393 550V597L411 599M377 588L393 597M330 531Q327 510 341 502L356 500Q376 510 373 538Q362 563 342 556Q331 549 330 531M344 500Q354 480 390 482Q417 490 430 519Q431 542 408 546L373 552M410 514Q426 501 426 526Q414 534 410 514M402 552Q414 542 420 532" /><circle cx="398" cy="513" r="3" />
    <path d="M397 415Q407 441 431 452L418 467Q470 472 526 463L514 445M488 415Q507 438 526 415M514 445Q540 442 541 461L580 464 590 454Q635 452 646 418M540 418Q558 435 580 423M650 415L700 415M690 419Q729 424 780 418" />
    <path d="M500 505L615 481 628 553 512 581ZM510 512L605 493 616 542 520 564ZM550 476L575 467 607 483M624 501L630 520 623 539M500 515L490 540 503 560M536 576L551 599 592 572M520 560L544 528 563 545 582 534 616 544" /><circle cx="586" cy="510" r="9" />
    <path d="M648 497Q652 484 672 489Q684 497 671 507L658 513Q671 519 688 514Q701 526 684 541M650 502Q646 532 672 563Q696 575 719 559Q731 529 717 505L716 457Q711 444 702 459L697 497 687 457Q676 447 673 460L684 501 697 497 713 505M684 501L692 516" />
    <circle cx="764" cy="502" r="17" /><path d="M745 533L764 527 784 529Q812 530 820 570L740 581Q735 550 745 533M764 527L769 540 782 530" />
    <path d="M525 631Q509 661 529 675Q544 682 556 675Q583 664 574 634Q560 624 546 632Q532 621 525 631M546 632L544 622 532 619M549 626Q565 630 569 616Q556 614 549 626" />
    <path d="M794 428L843 434 846 441 865 437 863 469 845 458 843 469Q816 472 791 465ZM803 434L805 442" />
    <path d="M664 598L710 621 661 656 669 629ZM901 589L987 589Q998 589 998 601V664Q998 676 986 676H929L906 697 904 676H896Q887 675 887 665L886 603Q886 589 901 589Z" />
    <text x="904" y="650" fontSize="48" fontWeight="800">Hi</text>
    <path d="M212 630L395 650Q411 652 410 668L402 800M212 630Q202 631 201 643L196 777 402 794M217 645L396 664 391 783 205 768ZM165 779L398 799M165 779L185 800" /><circle cx="304" cy="715" r="39" /><path d="M262 751L271 731Q261 684 304 684Q338 689 334 723Q320 752 286 744ZM290 699Q280 719 302 734Q319 744 324 731L310 721 303 727 292 713 299 704Z" />
    <path d="M530 800V790Q508 783 480 786L480 800M480 790Q439 795 424 786L458 771Q473 765 459 761Q425 758 427 714Q430 683 485 687Q536 688 547 735Q560 757 555 800M510 724L521 729M435 753Q459 759 468 738L445 741M477 686L486 679 490 688 508 680 513 690 524 685 525 698 538 696 536 709 549 708 545 721 557 724 549 736 562 742 553 750 565 757 556 766 565 776 556 787" /><Dots at="450,708,5 463,722,5" />
    <text x="784" y="766" fontSize="66" fontWeight="700" fontFamily="Noto Sans CJK SC, sans-serif">文</text><text x="852" y="783" fontSize="66" fontWeight="800">A</text>
    <path d="M30 745Q43 724 57 747L62 778Q61 792 44 794Q30 794 30 778ZM21 769Q19 800 47 802Q75 794 74 762M713 800Q709 765 742 765Q770 766 773 800M725 798Q724 777 744 774Q759 780 760 798" />
  </g>
);

const visibleRepeats = gardenItems.filter(([, x, y]) => !(x < 700 && y > 590));

const ChatWallpaper = () => (
  <Wallpaper width="817.5" height="601" viewBox="17 306 817.5 601" aria-hidden="true">
    <defs>
      <clipPath id="leftHalf"><rect x="17" y="657" width="413" height="250" /></clipPath>
      <clipPath id="rightHalf"><rect x="430" y="657" width="405" height="250" /></clipPath>
      <clipPath id="strip"><rect x="522" y="657" width="313" height="10" /></clipPath>
      <clipPath id="repeat"><rect x="467" y="667" width="368" height="240" /></clipPath>
    </defs>
    <Sky lettered />
    <City />
    <g transform="translate(-451 0)"><Sky /><City /></g>
    <rect x="17" y="657.5" width="817.5" height="250" fill="#323b46" stroke="none" />
    <g clipPath="url(#strip)"><City /></g>
    <g clipPath="url(#leftHalf)"><Garden /></g>
    <g clipPath="url(#rightHalf)"><Street /></g>
    <g clipPath="url(#repeat)">
      <g transform="translate(451 640) scale(.33333)">
        <Doodles items={visibleRepeats} />
        <path d="M980 461Q950 434 954 461Q966 495 997 486Q1021 471 1008 441Q992 420 967 430M979 460Q970 434 970 405M1070 800Q1094 706 1140 705Q1164 720 1193 706M1120 737L1131 740 1135 722 1149 727 1145 741 1158 748 1151 758 1139 751 1130 761 1119 753ZM1116 571L1131 578 1150 570M1116 571Q1116 610 1130 625" />
      </g>
    </g>
  </Wallpaper>
);

const PencilIcon = () => (
  <svg width="56" height="54" viewBox="0 0 168 162">
    <path fill="#fdf3dc" d="M33 9H145Q152 9 152 16T145 23H138V38H151Q160 40 160 47T151 56H142Q136 58 136 65T143 72H150Q159 73 159 82T150 93H145V101Q136 111 125 111Q115 113 115 121T124 130H145Q152 132 151 142T145 155H32Q26 143 24 137V110Q5 108 7 97T19 86H25V75H11Q2 72 3 62T14 49H45Q52 46 52 39T45 31H37Q29 28 30 19T33 9Z" />
    <circle cx="12" cy="144" r="8" fill="#fdf3dc" /><ellipse cx="16" cy="156" rx="7" ry="4" fill="#fdf3dc" />
    <path fill="#f2577d" d="M108 25L114 20Q120 15 127 21L147 42Q153 50 146 56L138 61Z" />
    <path fill="#98959b" d="M92 38L108 24Q126 39 138 60L121 77Q106 70 92 38Z" />
    <path fill="#2bae62" d="M91 39Q114 49 121 76L59 137 20 110Z" />
    <path fill="#40c878" d="M91 39Q99 44 103 51L38 117 25 108Z" />
    <path fill="#ffc072" d="M39 105Q53 112 58 137L28 149 23 143 29 110Z" />
    <path fill="#35404b" d="M23 138L35 151 21 153Z" />
  </svg>
);

const PlaneIcon = () => (
  <svg width="38" height="38" viewBox="0 0 38 38" fill="none" stroke="#071507" strokeWidth="1.8" strokeLinejoin="round">
    <path d="M2 16L36 1 21 35 15.5 22ZM15.5 22L35 2" />
  </svg>
);

interface Message { from: string; text: string; width: number; height: number; large?: boolean; own?: boolean }

const messages: Message[] = [
  { from: "Server", text: "Welcome to the chat!", width: 445.5, height: 55.3 },
  { from: "Server", text: "Mike has left the chat.", width: 459.5, height: 55.3 },
  { from: "Server", text: "Mike has joined the chat.", width: 496.5, height: 94.5 },
  { from: "Server", text: "Anurag has joined the chat.", width: 496.5, height: 111.5, large: true },
  { from: "Anurag", text: "Hii mike 🤗", width: 310, height: 111.5, large: true, own: true },
  { from: "Mike", text: "Hey anurag", width: 276, height: 111.5, large: true },
];

export default function App() {
  return (
    <Page>
      <GlobalStyle />
      <Card>
        <Title>Baatein</Title>
        <OnlineUsers>Online Users: Mike, Anurag</OnlineUsers>
        <FieldRow $top={20.5}>
          <Field $filled readOnly value="Anurag" aria-label="Name" />
          <IconButton $color="#000" aria-label="Edit name"><PencilIcon /></IconButton>
        </FieldRow>
        <ChatPanel>
          <ChatWallpaper />
          <Messages>
            {messages.map((m, i) => (
              <Bubble key={i} $own={m.own} $large={m.large} $width={m.width} $height={m.height}>
                <strong>{m.from}:</strong> {m.text}
              </Bubble>
            ))}
          </Messages>
        </ChatPanel>
        <FieldRow $top={13}>
          <Field placeholder="Type a message..." aria-label="Message" />
          <IconButton $color="#4caf50" aria-label="Send"><PlaneIcon /></IconButton>
        </FieldRow>
      </Card>
    </Page>
  );
}
